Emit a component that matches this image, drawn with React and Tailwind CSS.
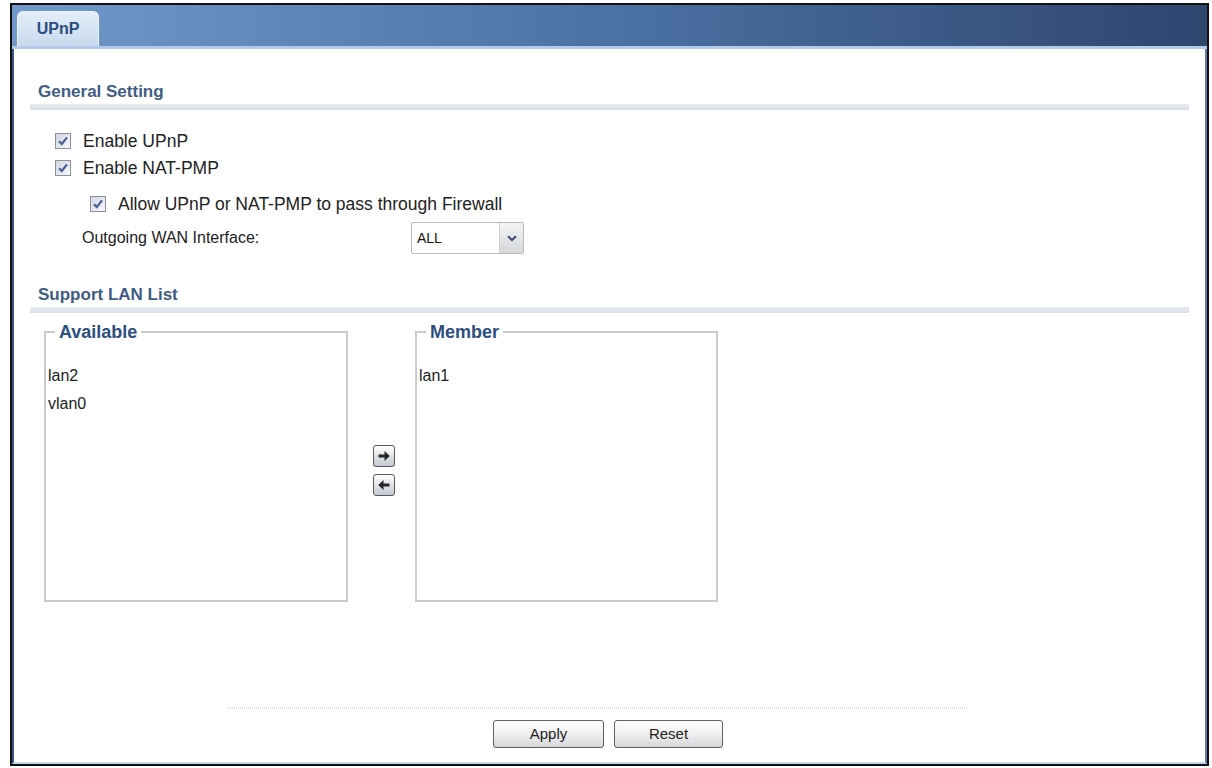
import React from 'react'

const font = { fontFamily: '"Liberation Sans", Arial, sans-serif' }

function Check() {
  return (
    <span className="w-[16px] h-[16px] border border-[#8e8f91] bg-gradient-to-br from-[#cfd7e4] to-[#f6f8fc] flex items-center justify-center shrink-0">
      <svg width="12" height="12" viewBox="0 0 12 12">
        <path d="M2 6.2 L4.8 9 L10 2.4" fill="none" stroke="#4a6090" strokeWidth="2.2" />
      </svg>
    </span>
  )
}

function ArrowBtn({ dir }) {
  return (
    <button className="w-[22px] h-[22px] border border-[#55585d] rounded-[3px] bg-gradient-to-b from-[#ffffff] to-[#c4c9d1] flex items-center justify-center">
      <svg width="14" height="14" viewBox="0 0 14 14">
        {dir === 'right'
          ? <path d="M1.5 5.4h6V2L12.8 7 7.5 12V8.6h-6z" fill="#262626" />
          : <path d="M12.5 5.4h-6V2L1.2 7 6.5 12V8.6h6z" fill="#262626" />}
      </svg>
    </button>
  )
}

function Liste({ titre, items, w }) {
  return (
    <fieldset className={`${w} h-[280px] border-2 border-[#cbcbcb] shrink-0`}>
      <legend className="ml-[9px] px-[4px] text-[18px] leading-[20px] font-bold text-[#2c4e80]">{titre}</legend>
      <div className="pt-[20px] pl-[2px] text-[16px] leading-[28px] text-[#222]">
        {items.map(i => <div key={i}>{i}</div>)}
      </div>
    </fieldset>
  )
}

function Bouton({ children, w }) {
  return (
    <button className={`${w} h-[28px] border border-[#5c5f64] rounded-[3px] bg-gradient-to-b from-[#ffffff] via-[#f0f0f0] to-[#d4d6d9] text-[15px] text-[#222]`}>
      {children}
    </button>
  )
}

export default function App() {
  return (
    <div className="w-[1212px] h-[768px] bg-white pt-[3px] pl-[10px]" style={font}>
      <div className="w-[1199px] h-[763px] border-2 border-[#111] flex flex-col">
        {/* En-tête avec onglet */}
        <div className="h-[41px] shrink-0 bg-gradient-to-r from-[#7199cb] via-[#4c72a5] to-[#2e466e] flex items-end pl-[5px]">
          <div className="w-[82px] h-[35px] rounded-t-[6px] bg-gradient-to-b from-[#e4edf8] to-[#c8daef] border-t border-x border-[#eef4fb] flex items-center justify-center">
            <span className="text-[16px] font-bold text-[#2b4c7e]">UPnP</span>
          </div>
        </div>
        <div className="h-[3px] shrink-0 bg-[#b1caea]" />

        {/* Contenu */}
        <div className="flex-1 flex flex-col bg-white border-l-2 border-l-[#3d5482] border-r-2 border-r-[#5b76a6] border-b-2 border-b-[#c3d5ec] px-[16px]">
          <div className="mt-[33px] pl-[8px] h-[20px] leading-[20px] text-[17px] font-bold text-[#3f5d84]">General Setting</div>
          <div className="mt-[2px] h-[6px] bg-gradient-to-b from-[#e8ebf0] to-[#d9dee6]" />

          <div className="mt-[18px] h-[26px] flex items-center gap-[12px] pl-[25px] text-[17.5px] text-[#222]">
            <Check /> Enable UPnP
          </div>
          <div className="mt-[1px] h-[26px] flex items-center gap-[12px] pl-[25px] text-[17.5px] text-[#222]">
            <Check /> Enable NAT-PMP
          </div>
          <div className="mt-[10px] h-[26px] flex items-center gap-[12px] pl-[60px] text-[17.5px] text-[#222]">
            <Check /> Allow UPnP or NAT-PMP to pass through Firewall
          </div>
          <div className="mt-[5px] h-[32px] flex items-center pl-[52px]">
            <span className="w-[329px] text-[16px] text-[#222]">Outgoing WAN Interface:</span>
            <div className="w-[113px] h-[32px] border border-[#b9b9b9] rounded-[2px] flex items-stretch bg-white">
              <span className="flex-1 flex items-center pl-[5px] text-[14px] text-[#111]">ALL</span>
              <span className="w-[24px] border-l border-[#cfcfcf] bg-gradient-to-b from-[#f4f4f4] to-[#d5d7da] flex items-center justify-center">
                <svg width="10" height="7" viewBox="0 0 10 7">
                  <path d="M1 1.2l4 3.8 4-3.8" stroke="#3f5270" strokeWidth="2.2" fill="none" />
                </svg>
              </span>
            </div>
          </div>

          <div className="mt-[31px] pl-[8px] h-[20px] leading-[20px] text-[17px] font-bold text-[#3f5d84]">Support LAN List</div>
          <div className="mt-[2px] h-[6px] bg-gradient-to-b from-[#e8ebf0] to-[#d9dee6]" />

          <div className="mt-[9px] flex items-start pl-[14px]">
            <Liste titre="Available" items={['lan2', 'vlan0']} w="w-[304px]" />
            <div className="ml-[25px] mt-[123px] flex flex-col gap-[7px]">
              <ArrowBtn dir="right" />
              <ArrowBtn dir="left" />
            </div>
            <div className="ml-[20px]">
              <Liste titre="Member" items={['lan1']} w="w-[303px]" />
            </div>
          </div>

          {/* Pied */}
          <div className="mt-auto pb-[14px]">
            <div className="ml-[198px] w-[739px] h-[2px] border-t border-[#d3d3d3] border-b border-dotted border-b-[#e6e6e6]" />
            <div className="mt-[11px] ml-[463px] flex gap-[10px]">
              <Bouton w="w-[111px]">Apply</Bouton>
              <Bouton w="w-[109px]">Reset</Bouton>
            </div>
          </div>
        </div>
      </div>
    </div>
  )
}
